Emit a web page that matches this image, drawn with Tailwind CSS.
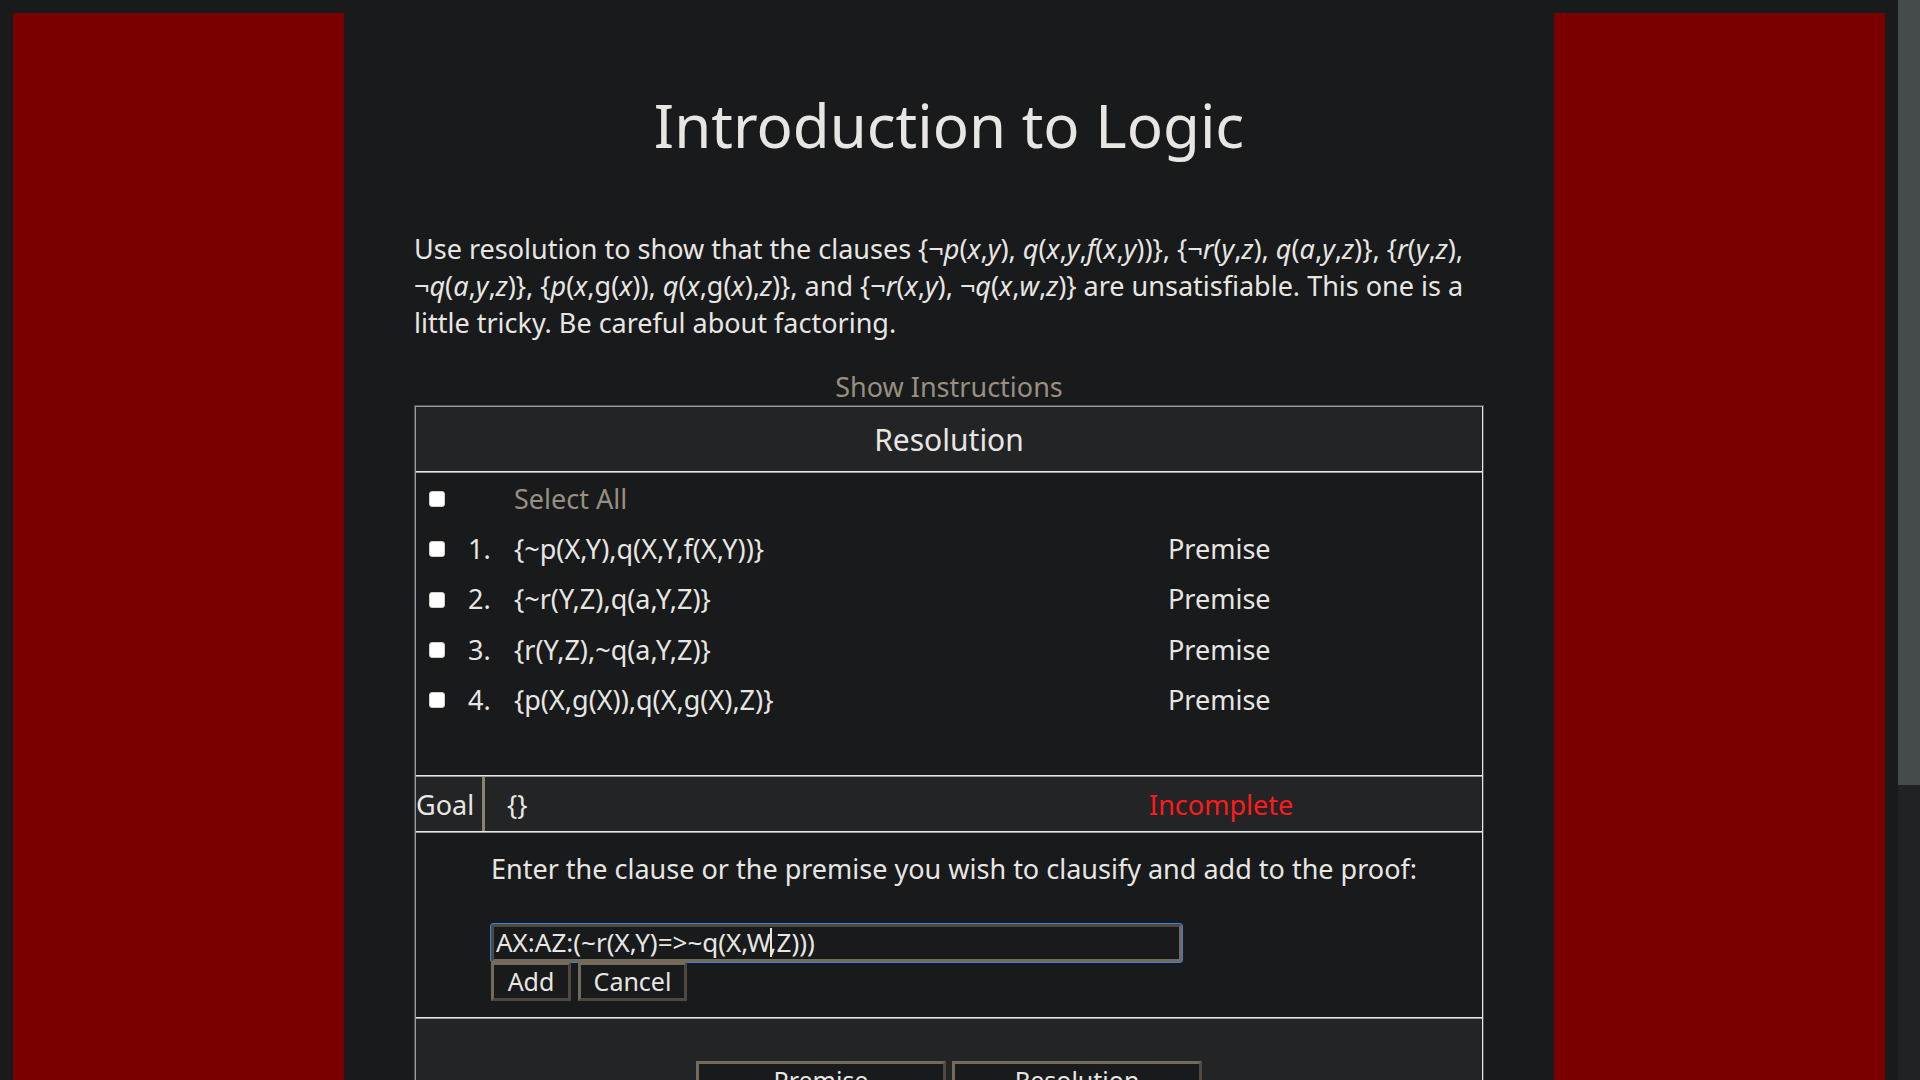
<!DOCTYPE html>
<html lang="en">
<head>
<meta charset="utf-8">
<title>Introduction to Logic</title>
<script src="https://cdn.jsdelivr.net/npm/@tailwindcss/browser@4"></script>
</head>
<body class="flex h-screen overflow-hidden bg-[#181a1b] font-['Noto_Sans',sans-serif] text-[27px] leading-[37px] text-[#e8e6e3]">
  <div class="min-w-0 flex-1 overflow-y-auto p-[13px] [scrollbar-width:none]">
    <div class="grid min-h-full grid-cols-[331fr_1210fr_331fr]">
      <div class="bg-[#7a0000]"></div>
      <main class="px-[70px] pb-16 pt-[71px]">
        <h1 class="text-center text-[60px] leading-[82px]">Introduction to Logic</h1>
        <p class="mt-16">Use resolution to show that the clauses {¬<i>p</i>(<i>x</i>,<i>y</i>), <i>q</i>(<i>x</i>,<i>y</i>,<i>f</i>(<i>x</i>,<i>y</i>))}, {¬<i>r</i>(<i>y</i>,<i>z</i>), <i>q</i>(<i>a</i>,<i>y</i>,<i>z</i>)}, {<i>r</i>(<i>y</i>,<i>z</i>), ¬<i>q</i>(<i>a</i>,<i>y</i>,<i>z</i>)}, {<i>p</i>(<i>x</i>,g(<i>x</i>)), <i>q</i>(<i>x</i>,g(<i>x</i>),<i>z</i>)}, and {¬<i>r</i>(<i>x</i>,<i>y</i>), ¬<i>q</i>(<i>x</i>,<i>w</i>,<i>z</i>)} are unsatisfiable. This one is a little tricky. Be careful about factoring.</p>
        <div class="mt-[27px] text-center"><a href="#" class="text-[#988f81]">Show Instructions</a></div>

        <section class="border border-b-0 border-[#505254]">
          <div class="border-l border-r border-t border-l-[#999a9a] border-r-[#e8e6e3] border-t-[#999a9a]">
            <h2 class="bg-[#222426] pb-[11px] pt-3 text-center text-[30px] leading-[41px]">Resolution</h2>

            <div class="border-t border-[#e8e6e3]">
              <div class="min-h-[303px] border-t border-[#999a9a]">
                <table class="w-full table-fixed border-collapse">
                  <colgroup><col class="w-[52px]"><col class="w-[46px]"><col class="w-[654px]"><col></colgroup>
                  <tbody>
                    <tr class="h-[50px]">
                      <td class="pl-[13px] pt-[2px]"><input id="all" type="checkbox" class="block size-4 appearance-none rounded-[3px] border border-[#d0ccc6] bg-white"></td>
                      <td></td>
                      <td><label for="all" class="text-[#988f81]">Select All</label></td>
                      <td></td>
                    </tr>
                    <tr class="h-[50px]">
                      <td class="pl-[13px] pt-[2px]"><input id="c1" type="checkbox" class="block size-4 appearance-none rounded-[3px] border border-[#d0ccc6] bg-white"></td>
                      <td>1.</td>
                      <td><label for="c1">{~p(X,Y),q(X,Y,f(X,Y))}</label></td>
                      <td>Premise</td>
                    </tr>
                    <tr class="h-[51px]">
                      <td class="pl-[13px] pt-[2px]"><input id="c2" type="checkbox" class="block size-4 appearance-none rounded-[3px] border border-[#d0ccc6] bg-white"></td>
                      <td>2.</td>
                      <td><label for="c2">{~r(Y,Z),q(a,Y,Z)}</label></td>
                      <td>Premise</td>
                    </tr>
                    <tr class="h-[50px]">
                      <td class="pl-[13px] pt-[2px]"><input id="c3" type="checkbox" class="block size-4 appearance-none rounded-[3px] border border-[#d0ccc6] bg-white"></td>
                      <td>3.</td>
                      <td><label for="c3">{r(Y,Z),~q(a,Y,Z)}</label></td>
                      <td>Premise</td>
                    </tr>
                    <tr class="h-[50px]">
                      <td class="pl-[13px] pt-[2px]"><input id="c4" type="checkbox" class="block size-4 appearance-none rounded-[3px] border border-[#d0ccc6] bg-white"></td>
                      <td>4.</td>
                      <td><label for="c4">{p(X,g(X)),q(X,g(X),Z)}</label></td>
                      <td>Premise</td>
                    </tr>
                  </tbody>
                </table>
              </div>
            </div>

            <div class="border-t border-[#e8e6e3]">
              <div class="flex h-[55px] items-stretch border-t border-[#999a9a] bg-[#222426]">
                <div class="flex w-[69px] items-center border-r-[3px] border-[#8c8273]">Goal</div>
                <div class="flex flex-1 items-center pl-[22px]">{}</div>
                <div class="flex w-[333px] items-center text-[#ff1a1a]">Incomplete</div>
              </div>
            </div>

            <div class="border-t border-[#e8e6e3]">
              <form class="border-t border-[#999a9a] pb-4 pl-[75px] pt-[17px]" onsubmit="return false">
                <label for="clause" class="block">Enter the clause or the premise you wish to clausify and add to the proof:</label>
                <div class="relative mt-[37px] w-[691px] max-w-full">
                  <input id="clause" type="text" spellcheck="false" value="AX:AZ:(~r(X,Y)=&gt;~q(X,W,Z)))" class="block h-[38px] w-full rounded-[2px] border-[3px] border-b-[#736a5c] border-l-[#4f4840] border-r-[#736a5c] border-t-[#4f4840] bg-[#181a1b] px-[2px] pb-[2px] text-[26px] leading-[30px] outline outline-[#3a84df]">
                  <span class="absolute left-[279px] top-1 h-[29px] w-[2px] bg-[#e8e6e3]"></span>
                </div>
                <div class="relative flex gap-[7px]">
                  <button type="submit" class="h-[39px] w-20 border-[3px] border-b-[#4f4840] border-l-[#736a5c] border-r-[#4f4840] border-t-[#736a5c] bg-[#181a1b] pb-[2px] text-[25px] leading-[30px]">Add</button>
                  <button type="button" class="h-[39px] w-[109px] border-[3px] border-b-[#4f4840] border-l-[#736a5c] border-r-[#4f4840] border-t-[#736a5c] bg-[#181a1b] pb-[2px] text-[25px] leading-[30px]">Cancel</button>
                </div>
              </form>
            </div>

            <div class="border-t border-[#e8e6e3]">
              <div class="flex justify-center gap-[6px] border-t border-[#999a9a] bg-[#222426] pb-12 pt-[42px]">
                <button type="button" class="h-[39px] w-[250px] border-[3px] border-b-[#4f4840] border-l-[#736a5c] border-r-[#4f4840] border-t-[#736a5c] bg-[#181a1b] pb-[2px] text-[25px] leading-[30px]">Premise</button>
                <button type="button" class="h-[39px] w-[250px] border-[3px] border-b-[#4f4840] border-l-[#736a5c] border-r-[#4f4840] border-t-[#736a5c] bg-[#181a1b] pb-[2px] text-[25px] leading-[30px]">Resolution</button>
              </div>
            </div>
          </div>
        </section>
      </main>
      <div class="bg-[#7a0000]"></div>
    </div>
  </div>
  <div class="w-[22px] shrink-0 bg-[#202324]"><div class="h-8/11 bg-[#454a4d]"></div></div>
</body>
</html>
